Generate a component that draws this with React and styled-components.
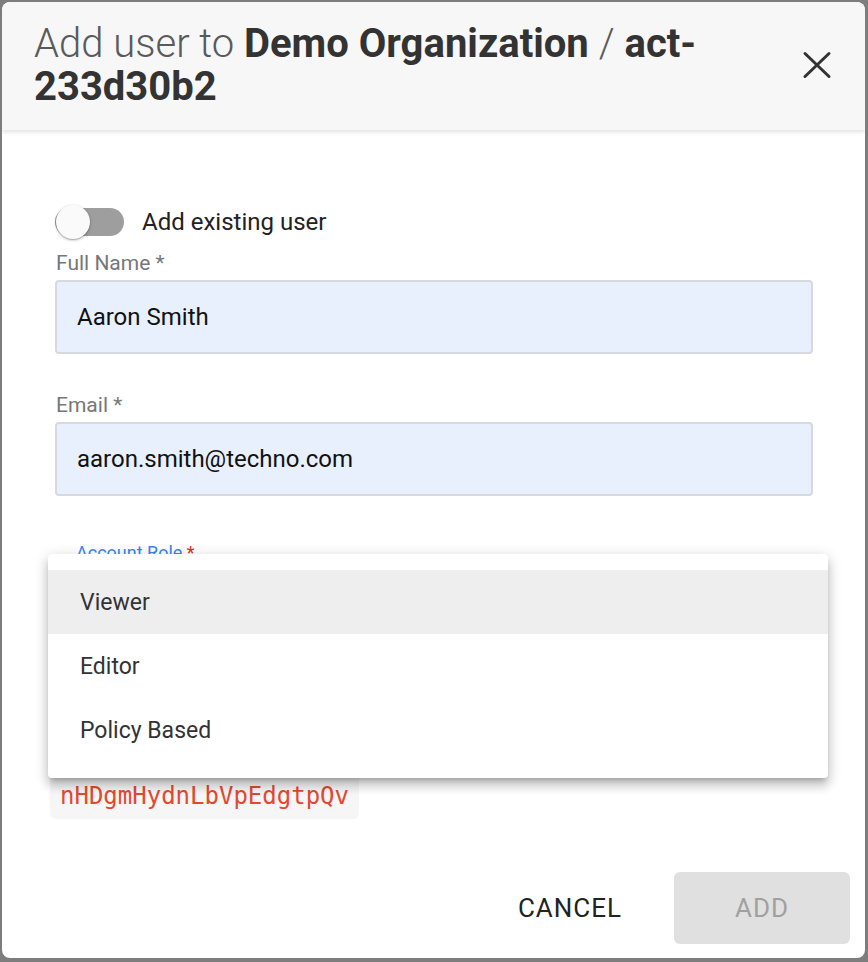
import React from 'react';
import styled, { createGlobalStyle } from 'styled-components';

const GlobalStyle = createGlobalStyle`
  html, body {
    margin: 0;
    padding: 0;
    background: #7d7d7d;
    font-family: 'Roboto', 'Liberation Sans', sans-serif;
  }
`;

const Page = styled.div`
  padding: 2px 3px 4px 2px;
  width: 868px;
  height: 962px;
  box-sizing: border-box;
`;

const Dialog = styled.div`
  position: relative;
  display: flex;
  flex-direction: column;
  height: 956px;
  background: #fff;
  border-radius: 8px;
  overflow: hidden;
`;

const Header = styled.header`
  display: flex;
  align-items: center;
  justify-content: space-between;
  padding: 20px 32px 22px 32px;
  background: #f7f7f7;
  box-shadow: 0 2px 4px rgba(0, 0, 0, 0.12);
  position: relative;
  z-index: 1;
`;

const Title = styled.h1`
  margin: 0;
  width: 700px;
  font-size: 40px;
  line-height: 43px;
  font-weight: 700;
  color: #333;
`;

const Light = styled.span`
  font-family: 'Roboto Light', 'Roboto Thin', 'Roboto', sans-serif;
  font-weight: 300;
  color: #5a5a5a;
`;

const CloseButton = styled.button`
  display: flex;
  border: 0;
  background: none;
  padding: 0;
  cursor: pointer;
`;

const Body = styled.div`
  display: flex;
  flex-direction: column;
  padding: 78px 52px 0 53px;
`;

const ToggleRow = styled.label`
  display: flex;
  align-items: center;
  gap: 18px;
  font-size: 24px;
  color: #222;
`;

const Track = styled.span`
  position: relative;
  display: block;
  width: 69px;
  height: 28px;
  border-radius: 14px;
  background: ${(p) => (p.$on ? '#90caf9' : '#9e9e9e')};
`;

const Thumb = styled.span`
  position: absolute;
  top: -3px;
  left: ${(p) => (p.$on ? '35px' : '1px')};
  width: 34px;
  height: 34px;
  border-radius: 50%;
  background: #fafafa;
  box-shadow: 0 1px 3px rgba(0, 0, 0, 0.3), 0 1px 1px rgba(0, 0, 0, 0.14);
`;

const Field = styled.div`
  display: flex;
  flex-direction: column;
  gap: 4px;
  margin-top: ${(p) => p.$top}px;
`;

const Label = styled.span`
  font-size: 21px;
  line-height: 26px;
  color: #777;
  padding-left: 1px;
`;

const Input = styled.div`
  display: flex;
  align-items: center;
  height: 74px;
  box-sizing: border-box;
  padding: 0 20px;
  background: #e8f0fe;
  border: 2px solid #d6d9de;
  border-radius: 4px;
  font-size: 24px;
  color: #111;
`;

const SelectField = styled.div`
  display: flex;
  flex-direction: column;
  margin-top: 46px;
  padding-left: 21px;
`;

const SelectLabel = styled.span`
  font-size: 18px;
  line-height: 22px;
  color: #3b86f0;
`;

const Required = styled.span`
  color: #d93025;
`;

const SelectValue = styled.div`
  height: 60px;
  border-bottom: 1px solid #bbb;
  font-size: 23px;
  line-height: 60px;
  color: #222;
`;

const SecretLabel = styled.span`
  margin-top: 117px;
  margin-left: -20px;
  font-size: 21px;
  line-height: 24px;
  color: #777;
`;

const Code = styled.code`
  align-self: flex-start;
  margin: 7px 0 0 -5px;
  padding: 8px 10px;
  background: #f6f6f6;
  border-radius: 6px;
  font-family: 'DejaVu Sans Mono', 'Liberation Mono', monospace;
  font-size: 24px;
  line-height: 30px;
  color: #e4492f;
`;

const Menu = styled.ul`
  position: absolute;
  left: 46px;
  top: 552px;
  width: 780px;
  margin: 0;
  padding: 16px 0;
  list-style: none;
  background: #fff;
  border-radius: 4px;
  box-shadow: 0 5px 5px -3px rgba(0, 0, 0, 0.2), 0 8px 10px 1px rgba(0, 0, 0, 0.14),
    0 3px 14px 2px rgba(0, 0, 0, 0.12);
  z-index: 2;
`;

const MenuItem = styled.li`
  height: 64px;
  display: flex;
  align-items: center;
  padding-left: 32px;
  font-size: 23px;
  color: #333;
  background: ${(p) => (p.$active ? '#eeeeee' : 'transparent')};
`;

const Footer = styled.footer`
  margin-top: auto;
  display: flex;
  justify-content: flex-end;
  gap: 16px;
  padding: 0 15px 14px 0;
`;

const Button = styled.button`
  width: 176px;
  height: 72px;
  border: 0;
  border-radius: 6px;
  font-family: 'Roboto', 'Liberation Sans', sans-serif;
  font-size: 26px;
  letter-spacing: 1px;
  text-transform: uppercase;
  background: ${(p) => (p.$disabled ? '#e0e0e0' : 'transparent')};
  color: ${(p) => (p.$disabled ? '#a0a0a0' : '#222')};
`;

const roles = ['Viewer', 'Editor', 'Policy Based'];

export default function App() {
  return (
    <Page>
      <GlobalStyle />
      <Dialog>
        <Header>
          <Title>
            <Light>Add user to </Light>Demo Organization <Light>/</Light> act-233d30b2
          </Title>
          <CloseButton aria-label="close">
            <svg width="32" height="32" viewBox="0 0 32 32">
              <path d="M4 4.5 L28 27.5 M28 4.5 L4 27.5" stroke="#333" strokeWidth="3" strokeLinecap="round" />
            </svg>
          </CloseButton>
        </Header>

        <Body>
          <ToggleRow>
            <Track>
              <Thumb />
            </Track>
            Add existing user
          </ToggleRow>

          <Field $top={14}>
            <Label>Full Name *</Label>
            <Input>Aaron Smith</Input>
          </Field>

          <Field $top={38}>
            <Label>Email *</Label>
            <Input>aaron.smith@techno.com</Input>
          </Field>

          <SelectField>
            <SelectLabel>
              Account Role <Required>*</Required>
            </SelectLabel>
            <SelectValue>Viewer</SelectValue>
            <SecretLabel>Temporary password</SecretLabel>
          </SelectField>

          <Code>nHDgmHydnLbVpEdgtpQv</Code>
        </Body>

        <Menu>
          {roles.map((r, i) => (
            <MenuItem key={r} $active={i === 0}>
              {r}
            </MenuItem>
          ))}
        </Menu>

        <Footer>
          <Button>Cancel</Button>
          <Button $disabled>Add</Button>
        </Footer>
      </Dialog>
    </Page>
  );
}
